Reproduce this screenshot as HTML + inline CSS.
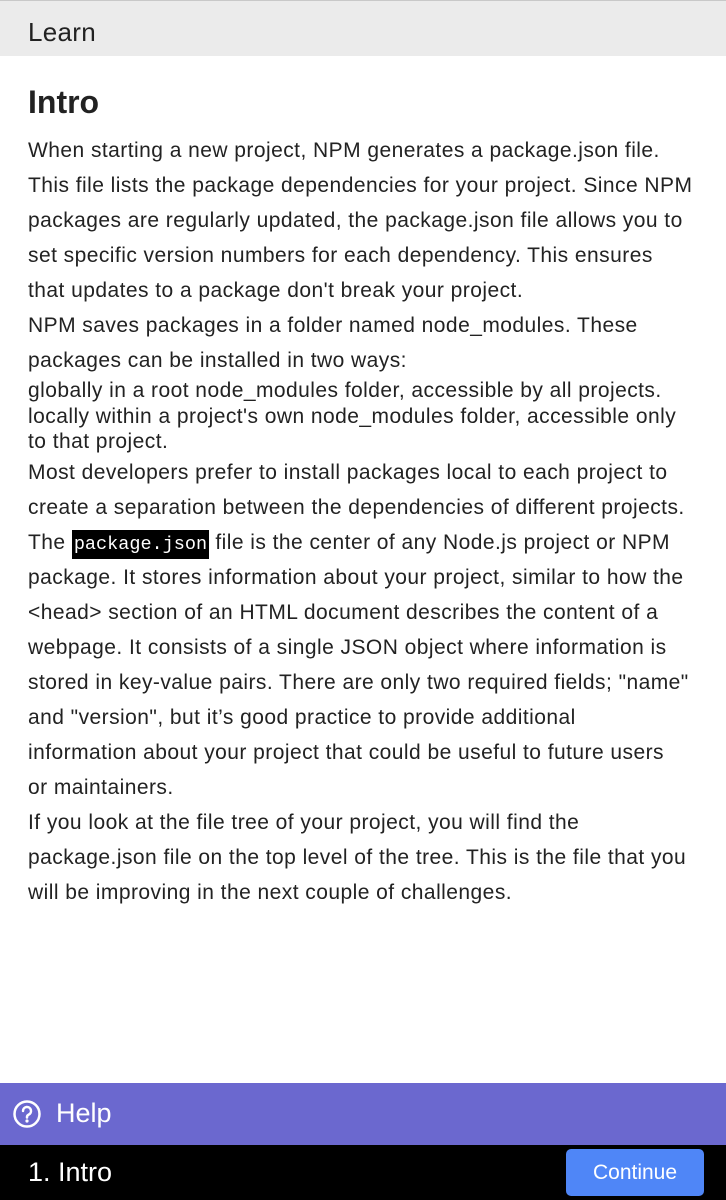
<!DOCTYPE html>
<html><head><meta charset="utf-8"><style>
*{margin:0;padding:0;box-sizing:border-box}
body{width:726px;height:1200px;overflow:hidden;background:#fff;font-family:"Liberation Sans",sans-serif;color:#222;position:relative}
.hdr{position:absolute;top:0;left:0;width:726px;height:56px;background:#ebebeb;border-top:1px solid #c8c8c8;font-size:26px;color:#222;padding:16px 0 0 28px;letter-spacing:0.3px}
h1{position:absolute;top:84px;left:28px;font-size:32px;font-weight:bold;color:#222}
.c{position:absolute;top:133px;left:28px;font-size:21px;white-space:nowrap;letter-spacing:0.45px}
.l{line-height:35px}
.s{line-height:25.5px}
code{font-family:"Liberation Mono",monospace;background:#000;color:#fff;padding:4px 2px;font-size:18.5px;letter-spacing:0;line-height:1}
.help{position:absolute;top:1083px;left:0;width:726px;height:62px;background:#6b68cf;color:#fff;font-size:27px}
.help svg{position:absolute;left:12px;top:16px}
.help span{position:absolute;left:56px;top:15px}
.foot{position:absolute;top:1145px;left:0;width:726px;height:55px;background:#000;color:#fff}
.foot .t{position:absolute;left:28px;top:12px;font-size:27px}
.btn{position:absolute;left:566px;top:4px;width:138px;height:47px;background:#4f86f7;border-radius:5px;color:#fff;font-size:21px;text-align:center;line-height:47px}
</style></head><body>
<div class="hdr">Learn</div>
<h1>Intro</h1>
<div class="c">
<div class="l">When starting a new project, NPM generates a package.json file.<br>This file lists the package dependencies for your project. Since NPM<br>packages are regularly updated, the package.json file allows you to<br>set specific version numbers for each dependency. This ensures<br>that updates to a package don't break your project.<br>NPM saves packages in a folder named node_modules. These<br>packages can be installed in two ways:</div>
<div class="s">globally in a root node_modules folder, accessible by all projects.<br>locally within a project's own node_modules folder, accessible only<br>to that project.</div>
<div class="l">Most developers prefer to install packages local to each project to<br>create a separation between the dependencies of different projects.<br>The <code>package.json</code> file is the center of any Node.js project or NPM<br>package. It stores information about your project, similar to how the<br>&lt;head&gt; section of an HTML document describes the content of a<br>webpage. It consists of a single JSON object where information is<br>stored in key-value pairs. There are only two required fields; "name"<br>and "version", but it’s good practice to provide additional<br>information about your project that could be useful to future users<br>or maintainers.<br>If you look at the file tree of your project, you will find the<br>package.json file on the top level of the tree. This is the file that you<br>will be improving in the next couple of challenges.</div>
</div>
<div class="help"><svg width="30" height="30" viewBox="0 0 30 30"><circle cx="15" cy="15" r="12.5" fill="none" stroke="#fff" stroke-width="2.5"/><path d="M11 12a4 4 0 1 1 5.5 3.7c-1 .5-1.5 1.2-1.5 2.3v.5" fill="none" stroke="#fff" stroke-width="2.5" stroke-linecap="round"/><circle cx="15" cy="22" r="1.6" fill="#fff"/></svg><span>Help</span></div>
<div class="foot"><div class="t">1. Intro</div><div class="btn">Continue</div></div>
</body></html>
